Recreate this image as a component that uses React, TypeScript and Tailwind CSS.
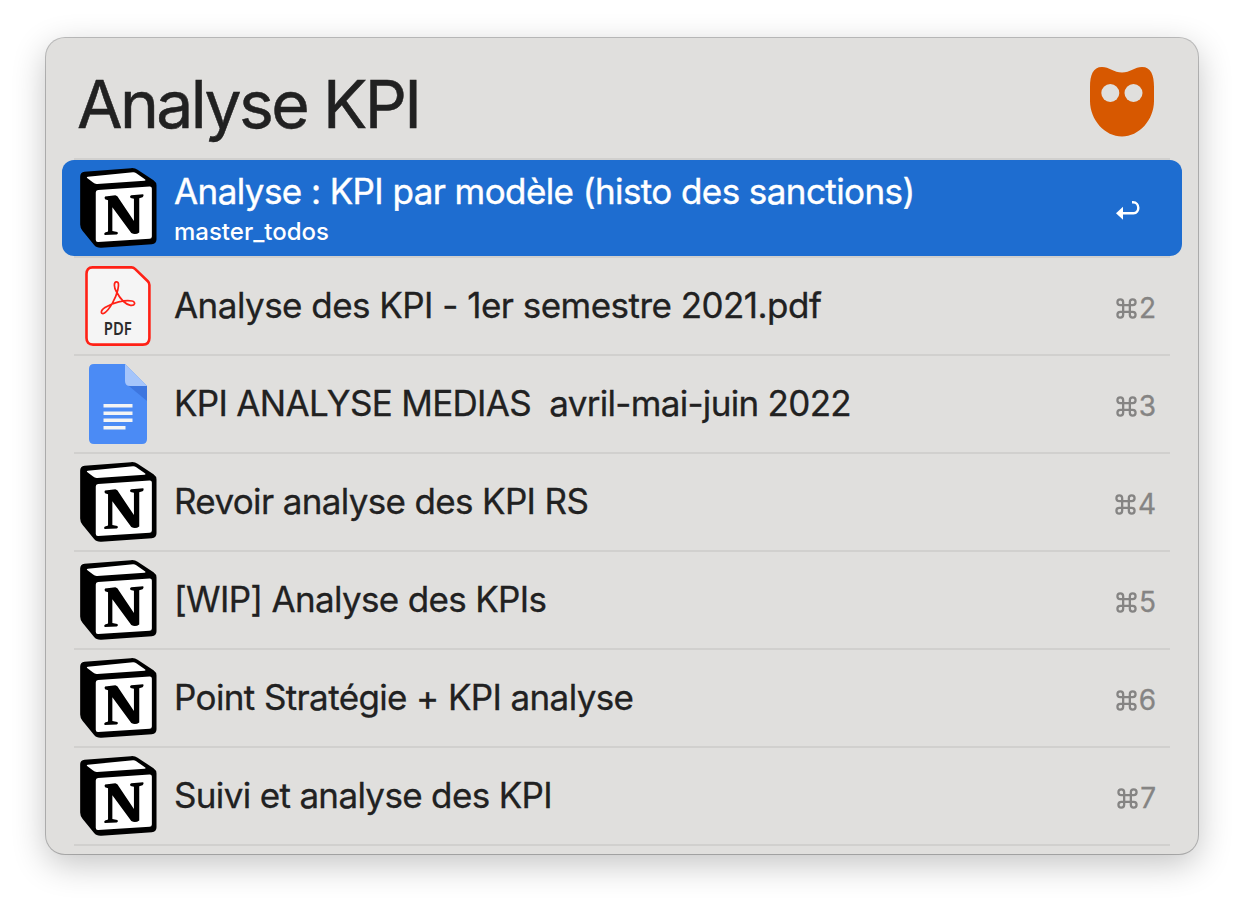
import type { ReactNode } from "react";

function NotionIcon() {
  return (
    <svg viewBox="59 39 231 241" className="h-[80px] w-[77px]">
      <path
        d="M72 50 L212 39.500 Q224 38.500 232 44 L280 76 Q289 82 289 92 V254 Q289 268 275 269 L123 279 Q108 280 101 271 L66 228 Q59 219 59 209 V65 Q59 51 72 50Z"
        fill="#000"
      />
      <path d="M82 65 L218 52 Q223 51.500 227 54 L255 74 Q258 77 253 77.500 L110 87 Q103 87.500 98 83 L80 69 Q77 66 82 65Z" fill="#fff" />
      <path d="M113 105 L268 94.500 Q275 94 275 101 V245 Q275 252 268 252.500 L113 262 Q106 262.500 106 255 V113 Q106 105.500 113 105Z" fill="#fff" />
      <path
        d="M134 125 L165 121 L171 124 L221 199 V132 L211 129 Q207 123 213 121 L249 118 Q252 123 247 127 L237 130 V233 Q226 241 213 235 L156 157 V229 L171 232 Q175 237 169 239 L133 241 Q129 236 134 233 L143 230 V136 L134 133 Q131 128 134 125Z"
        fill="#000"
      />
    </svg>
  );
}

function PdfIcon() {
  return (
    <svg viewBox="0 0 66 80" className="h-[80px] w-[66px]">
      <path
        d="M7.500 1.400 H46.500 Q48.500 1.400 50 2.900 L62.800 15.200 Q64.400 16.700 64.400 19 V72 Q64.400 78.600 57.800 78.600 H8 Q1.500 78.600 1.500 72 V8 Q1.500 1.400 7.500 1.400Z"
        fill="#f5f5f5"
        stroke="#ff2116"
        strokeWidth="2.600"
      />
      <path
        d="M31.300 15.800 C28.500 16 29 21.500 31.300 25.500 C34.500 31.500 39.500 38.300 45.500 39.300 C50 40 51.300 36 47 35 C40 33.600 27.500 36.500 20 41.500 C14.500 45.200 16 49 19.500 47 C25 43 31 31.500 32.800 24 C34 19 33.800 15.600 31.300 15.800Z"
        fill="none"
        stroke="#ff2116"
        strokeWidth="1.700"
        strokeLinejoin="round"
      />
      <text x="32.800" y="68.600" textAnchor="middle" fill="#2c2c2c" fontFamily="Noto Sans, sans-serif" fontWeight="600" fontSize="17" textLength="28" lengthAdjust="spacingAndGlyphs">
        PDF
      </text>
    </svg>
  );
}

function DocsIcon() {
  return (
    <svg viewBox="0 0 58 80" className="h-[80px] w-[58px]">
      <path d="M5 0 H36 L58 22 V75 Q58 80 53 80 H5 Q0 80 0 75 V5 Q0 0 5 0Z" fill="#4b8bf5" />
      <path d="M38 20.500 L58 37 V22Z" fill="#3d76df" />
      <path d="M36 0 L58 22 H41 Q36 22 36 17Z" fill="#a5c5fb" />
      <path d="M14.500 40 H43.500 V43.500 H14.500Z M14.500 47.500 H43.500 V51 H14.500Z M14.500 54.500 H43.500 V58 H14.500Z M14.500 62 H36.500 V65.500 H14.500Z" fill="#f4f4f4" />
    </svg>
  );
}

function OwlIcon() {
  return (
    <svg viewBox="0 0 64 70" className="h-[70px] w-[64px]">
      <path
        d="M12 0 C19 0 24 5.500 32 5.500 C40 5.500 45 0 52 0 C61 0 64 8 64 20 V34 C64 53 49 69.500 32 69.500 C15 69.500 0 53 0 34 V20 C0 8 3 0 12 0Z"
        fill="#d75800"
      />
      <circle cx="20.300" cy="26" r="9" fill="#e0dfdd" />
      <circle cx="43.500" cy="26" r="9" fill="#e0dfdd" />
    </svg>
  );
}

function ReturnIcon() {
  return (
    <svg viewBox="0 0 24 19" className="h-[19px] w-[24px]">
      <path d="M0 12.300 L7 5.800 V18.800Z" fill="#fff" />
      <path d="M6 12.300 H17.500 C24 12.300 24 1.300 17 1.300 H16" fill="none" stroke="#fff" strokeWidth="2.400" />
    </svg>
  );
}

function CommandIcon() {
  return (
    <svg viewBox="0 0 22 22" className="h-[21px] w-[21px]">
      <path
        d="M7.500 7.500 H14.500 V14.500 H7.500Z M7.500 7.500 H4.500 A3 3 0 1 1 7.500 4.500Z M14.500 7.500 V4.500 A3 3 0 1 1 17.500 7.500Z M14.500 14.500 H17.500 A3 3 0 1 1 14.500 17.500Z M7.500 14.500 V17.500 A3 3 0 1 1 4.500 14.500Z"
        fill="none"
        stroke="#858483"
        strokeWidth="2.400"
      />
    </svg>
  );
}

type Result = { title: string; tracking: string; icon: ReactNode; key: string };

const results: Result[] = [
  { title: "Analyse des KPI - 1er semestre 2021.pdf", tracking: "tracking-[-0.53px]", icon: <PdfIcon />, key: "2" },
  { title: "KPI ANALYSE MEDIAS  avril-mai-juin 2022", tracking: "tracking-[-0.69px]", icon: <DocsIcon />, key: "3" },
  { title: "Revoir analyse des KPI RS", tracking: "tracking-[-0.65px]", icon: <NotionIcon />, key: "4" },
  { title: "[WIP] Analyse des KPIs", tracking: "tracking-[-0.67px]", icon: <NotionIcon />, key: "5" },
  { title: "Point Stratégie + KPI analyse", tracking: "tracking-[-0.62px]", icon: <NotionIcon />, key: "6" },
  { title: "Suivi et analyse des KPI", tracking: "tracking-[-0.66px]", icon: <NotionIcon />, key: "7" },
];

export default function App() {
  return (
    <div className="flex h-[908px] w-[1244px] items-start bg-white pt-[38px] pl-[46px] font-['Inter',sans-serif]">
      <main className="flex h-[816px] w-[1152px] flex-col overflow-hidden rounded-[19px] bg-[#e0dfdd] px-4 shadow-[0_0_0_1px_rgba(0,0,0,0.24),0_10px_34px_rgba(0,0,0,0.24)]">
        <header className="flex h-[120px] shrink-0 items-start justify-between pr-[28px] pl-[15px]">
          <h1 className="mt-[26px] text-[66px] leading-[80px] font-normal tracking-[-2.6px] text-[#212121] [-webkit-text-stroke:0.5px_#212121]">Analyse KPI</h1>
          <div className="mt-[29px]">
            <OwlIcon />
          </div>
        </header>
        <div className="mx-3 h-[2px] shrink-0 bg-[#d1d0ce]" />
        <section className="flex h-24 shrink-0 items-center rounded-[12px] bg-[#1e6dd0] pr-[42px] text-white">
          <div className="ml-[10px] flex w-[92px] justify-center">
            <NotionIcon />
          </div>
          <div className="mt-[2px] ml-[10px] flex-1 whitespace-pre">
            <div className="h-[45px] text-[35px] leading-[44px] tracking-[-0.58px] [-webkit-text-stroke:0.4px_#fff]">Analyse : KPI par modèle (histo des sanctions)</div>
            <div className="h-[35px] text-[24px] leading-[36px] font-medium">master_todos</div>
          </div>
          <div className="mt-[5px]">
            <ReturnIcon />
          </div>
        </section>
        <ul>
          {results.map((r) => (
            <li key={r.key} className="flex h-[98px] flex-col">
              <div className="mx-3 h-[2px] bg-[#d1d0ce]" />
              <div className="flex h-24 items-center pr-[26px]">
                <div className="ml-[10px] flex w-[92px] justify-center">{r.icon}</div>
                <div
                  className={`-mt-[2px] ml-[10px] flex-1 text-[35px] leading-[44px] whitespace-pre text-[#212121] [-webkit-text-stroke:0.3px_#212121] ${r.tracking}`}
                >
                  {r.title}
                </div>
                <div className="mt-[4px] flex items-center gap-[2px] text-[28px] leading-[34px] text-[#858483] [-webkit-text-stroke:0.3px_#858483]">
                  <CommandIcon />
                  <span>{r.key}</span>
                </div>
              </div>
            </li>
          ))}
        </ul>
        <div className="mx-3 h-[2px] shrink-0 bg-[#d1d0ce]" />
      </main>
    </div>
  );
}
